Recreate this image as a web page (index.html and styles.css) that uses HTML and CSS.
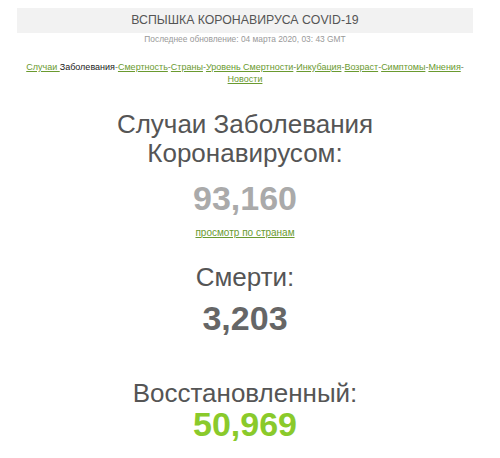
FILE: index.html
```html
<!DOCTYPE html>
<html lang="ru">
<head>
<meta charset="utf-8">
<link rel="stylesheet" href="styles.css">
</head>
<body>
<div class="page">
  <div class="title-bar">ВСПЫШКА КОРОНАВИРУСА COVID-19</div>
  <div class="updated">Последнее обновление: 04 марта 2020, 03: 43 GMT</div>
  <nav class="nav"><a href="#">Случаи </a>Заболевания<span class="sep">-</span><a href="#">Смертность</a><span class="sep">-</span><a href="#">Страны</a><span class="sep">-</span><a href="#">Уровень Смертности</a><span class="sep">-</span><a href="#">Инкубация</a><span class="sep">-</span><a href="#">Возраст</a><span class="sep">-</span><a href="#">Симптомы</a><span class="sep">-</span><a href="#">Мнения</a><span class="sep">-</span><a href="#">Новости</a></nav>

  <section class="counter cases-block">
    <h1 class="label">Случаи Заболевания<br>Коронавирусом:</h1>
    <div class="number cases">93,160</div>
    <div class="by-country"><a href="#">просмотр по странам</a></div>
  </section>

  <section class="counter deaths-block">
    <h1 class="label">Смерти:</h1>
    <div class="number deaths">3,203</div>
  </section>

  <section class="counter recovered-block">
    <h1 class="label">Восстановленный:</h1>
    <div class="number recovered">50,969</div>
  </section>
</div>
</body>
</html>
```
FILE: styles.css
```css
* { box-sizing: border-box; }
html, body { margin: 0; padding: 0; background: #fff; }
body { font-family: "Liberation Sans", Arial, sans-serif; color: #444; }
.page { width: 456px; margin: 8px 0 0 17px; text-align: center; }
.title-bar {
  background: #f2f2f2;
  color: #555;
  font-size: 12.3px;
  height: 25px;
  line-height: 25px;
}
.updated { color: #999; font-size: 8.4px; line-height: 12px; }
.nav {
  margin-top: 16px;
  font-size: 9px;
  line-height: 12px;
  color: #222;
}
.nav a { color: #6a9a2f; text-decoration: underline; }
.nav .sep { color: #6f7f5f; }
.label {
  margin: 0;
  font-weight: normal;
  font-size: 26px;
  line-height: 29px;
  color: #555;
}
.number { font-weight: bold; font-size: 34px; line-height: 40px; }
.cases-block { margin-top: 25px; }
.cases-block .number { margin-top: 10px; }
.deaths-block { margin-top: 24.5px; }
.deaths-block .number { margin-top: 5.5px; }
.recovered-block { margin-top: 42px; }
.recovered-block .label { line-height: 26px; }
.recovered-block .number { margin-top: 1px; line-height: 34px; }
.cases { color: #aaa; }
.deaths { color: #666; }
.recovered { color: #8aca2b; }
.by-country {
  margin-top: 7.5px;
  font-size: 10px;
  line-height: 13px;
}
.by-country a { color: #6a9a2f; text-decoration: underline; }
```
